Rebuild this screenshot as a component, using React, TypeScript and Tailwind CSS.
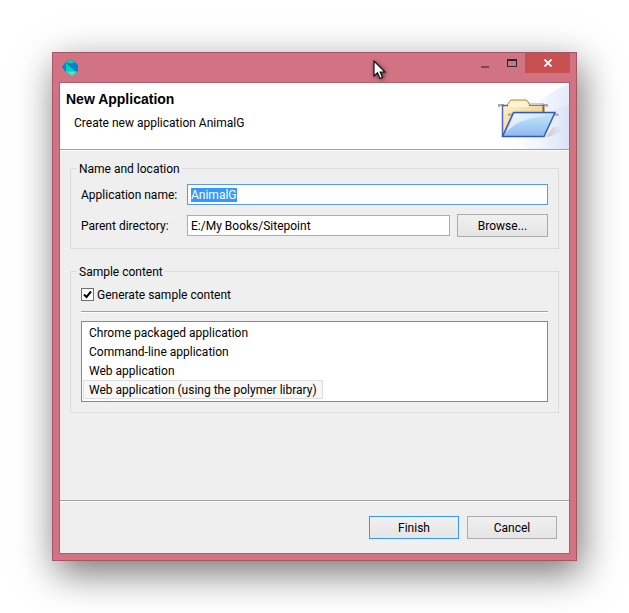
import { useEffect, useRef, useState } from "react";

const templates = [
  "Chrome packaged application",
  "Command-line application",
  "Web application",
  "Web application (using the polymer library)",
];

function DartIcon() {
  return (
    <svg width="16" height="16" viewBox="0 0 16 16" aria-hidden="true">
      <path d="M4 3 8.500 0 13 3 16 6V12L12 16H8L4 13 0 8Z" fill="#0083c9" />
      <path d="M4 4 8.500 0 13 4Z" fill="#14c8b4" />
      <path d="M4 4 14 13H4Z" fill="#00d2b8" />
      <path d="M4 3V13L0 8Z" fill="#0a86c8" />
      <path d="M4 12.500H15L12 16H8Z" fill="#55dec9" />
    </svg>
  );
}

function FolderBanner() {
  return (
    <svg width="79" height="66" viewBox="0 0 79 66" aria-hidden="true">
      <defs>
        <linearGradient id="sky" x1="0" y1="0.2" x2="1" y2="0.3">
          <stop offset="0.3" stopColor="#ffffff" />
          <stop offset="1" stopColor="#e4ebf9" />
        </linearGradient>
        <linearGradient id="ray" x1="0" y1="0" x2="1" y2="0">
          <stop offset="0.2" stopColor="#ffffff" stopOpacity="0" />
          <stop offset="1" stopColor="#cbd8f3" stopOpacity="0.45" />
        </linearGradient>
        <linearGradient id="back" x1="0" y1="0" x2="1" y2="1">
          <stop offset="0" stopColor="#fff3cf" />
          <stop offset="1" stopColor="#edc566" />
        </linearGradient>
        <linearGradient id="front" x1="0" y1="0" x2="0" y2="1">
          <stop offset="0" stopColor="#c4e8fe" />
          <stop offset="1" stopColor="#8fb8ee" />
        </linearGradient>
        <linearGradient id="shine" x1="0" y1="0" x2="1" y2="0.4">
          <stop offset="0" stopColor="#ffffff" stopOpacity="0.85" />
          <stop offset="1" stopColor="#ffffff" stopOpacity="0.1" />
        </linearGradient>
        <linearGradient id="shade" x1="0" y1="0" x2="1" y2="0">
          <stop offset="0" stopColor="#b08f9d" stopOpacity="0.5" />
          <stop offset="1" stopColor="#c9b5c4" stopOpacity="0" />
        </linearGradient>
      </defs>
      <path d="M79 1C58 8 44 25 22 40 12 50 8 58 6 66H79Z" fill="url(#sky)" />
      <path d="M79 22C60 25 40 42 26 66H79Z" fill="url(#ray)" />
      <path d="M56 54 63 44 74 44C71 49 65 53 56 54Z" fill="url(#shade)" />
      <path d="M9 24V22H14M52 22H57V24" fill="none" stroke="#a9a9b0" strokeWidth="2" />
      <path d="M12.500 53V22.500H17.500L19.500 18.500 21 17H36L38 18.500 40 22.500H53.500V50Z" fill="url(#back)" />
      <path d="M17 22.500 19.500 18.500 21 17H36L38 18.500 40 22.500" fill="none" stroke="#b08b35" />
      <path d="M19 23 20.500 19.500 22 18H35L37 19.500 39 24H18Z" fill="#fff4d8" />
      <path d="M39 21H54" fill="none" stroke="#9595c8" />
      <path d="M39 22.500H53.500" fill="none" stroke="#a27c2c" />
      <path d="M53.500 22V30" fill="none" stroke="#8a6720" strokeWidth="2" />
      <path d="M12.500 53V22.500H18" fill="none" stroke="#5364b4" strokeWidth="1.500" />
      <path d="M19 33V31.500H25M62 31.500H67.500V33" fill="none" stroke="#a9a9b8" strokeWidth="2" />
      <path d="M23.500 29.500H65L54 53.500H12.500Z" fill="url(#front)" />
      <path d="M24.500 31H62C54 34 44 34 36 37 26 40 20 45 15 51Z" fill="url(#shine)" />
      <path d="M23.500 29.500H65L54 53.500H12.500Z" fill="none" stroke="#3457c2" strokeWidth="1.500" />
    </svg>
  );
}

function MousePointer() {
  return (
    <svg
      className="pointer-events-none absolute top-[7px] left-[320px] drop-shadow-[1px_1px_2px_rgba(0,0,0,0.6)]"
      width="13"
      height="20"
      viewBox="0 0 13 20"
      aria-hidden="true"
    >
      <path
        d="M1 1V16L4.500 12.800 7 18.500 9.500 17.400 7.200 12H12Z"
        fill="#fff"
        stroke="#111"
        strokeWidth="1.200"
      />
    </svg>
  );
}

const groupBox = "min-w-0 border border-[#dcdcdc] px-1.5";
const groupTitle = "h-[17px] px-0.5 leading-[19px]";
const pushButton =
  "h-[23px] border bg-linear-to-b from-[#f0f0f0] to-[#e5e5e5] pt-px text-center leading-[20px]";
const textBox =
  "h-[21px] min-w-0 flex-1 border bg-white px-[3px] outline-none selection:bg-[#3399ff] selection:text-white";

export default function App() {
  const nameRef = useRef<HTMLInputElement>(null);
  const [name, setName] = useState("AnimalG");
  const [directory, setDirectory] = useState("E:/My Books/Sitepoint");
  const [sample, setSample] = useState(true);
  const [selected, setSelected] = useState(3);

  useEffect(() => {
    nameRef.current?.focus();
    nameRef.current?.select();
  }, []);

  return (
    <div className="flex min-h-screen bg-white p-[52px] font-['Roboto',sans-serif] text-[12px] text-black">
      <main className="relative flex min-w-0 flex-1 flex-col border border-[#a55567] bg-[#d27384] px-1.5 pb-1.5 shadow-[4px_12px_36px_0px_rgba(0,0,0,0.55)]">
        <header className="flex h-[29px] items-start justify-between">
          <span className="pt-1.5 pl-[3px]">
            <DartIcon />
          </span>
          <div className="flex">
            <button aria-label="Minimize" className="flex h-5 w-[27px] items-end justify-center pb-[5px]">
              <span className="h-0.5 w-2 bg-[#7c4751]" />
            </button>
            <button aria-label="Maximize" className="flex h-5 w-[27px] items-center justify-center">
              <span className="h-2 w-2.5 border border-t-2 border-[#2a2a2a]" />
            </button>
            <button aria-label="Close" className="flex h-5 w-[45px] items-center justify-center bg-[#c75050]">
              <svg width="8" height="8" viewBox="0 0 8 8" aria-hidden="true">
                <path d="M0.500 0.500 7.500 7.500M7.500 0.500 0.500 7.500" stroke="#fff" strokeWidth="1.800" />
              </svg>
            </button>
          </div>
        </header>
        <MousePointer />

        <div className="flex flex-1 flex-col border border-[#b05c6e] bg-[#efefef]">
          <section className="flex h-[67px] justify-between border-b border-[#a0a0a0] bg-white">
            <div className="pt-2 pl-1.5">
              <h1 className="font-['Liberation_Sans',sans-serif] text-[14px] leading-[17px] font-bold">New Application</h1>
              <p className="pt-1.5 pl-2 leading-[19px]">Create new application AnimalG</p>
            </div>
            <FolderBanner />
          </section>

          <form className="flex flex-1 flex-col border-t border-white" onSubmit={(e) => e.preventDefault()}>
            <div className="flex flex-1 flex-col gap-3.5 px-2.5 pt-[9px] pb-4">
              <fieldset className={groupBox}>
                <legend className={groupTitle}>Name and location</legend>
                <div className="flex flex-col gap-[9px] px-1 pt-[7px] pb-[11px]">
                  <div className="flex items-center">
                    <label htmlFor="app-name" className="w-[106px]">Application name:</label>
                    <input
                      id="app-name"
                      ref={nameRef}
                      value={name}
                      onChange={(e) => setName(e.target.value)}
                      className={`${textBox} border-[#569de5]`}
                    />
                  </div>
                  <div className="flex items-center">
                    <label htmlFor="parent-dir" className="w-[106px]">Parent directory:</label>
                    <input
                      id="parent-dir"
                      value={directory}
                      onChange={(e) => setDirectory(e.target.value)}
                      className={`${textBox} border-[#abadb3]`}
                    />
                    <button type="button" className={`${pushButton} ml-[7px] w-[91px] border-[#acacac]`}>
                      Browse...
                    </button>
                  </div>
                </div>
              </fieldset>

              <fieldset className={groupBox}>
                <legend className={groupTitle}>Sample content</legend>
                <div className="px-1 pt-1.5 pb-2.5">
                  <label className="flex h-[17px] items-center gap-[3px]">
                    <span className="grid">
                      <input
                        type="checkbox"
                        checked={sample}
                        onChange={(e) => setSample(e.target.checked)}
                        className="peer col-start-1 row-start-1 size-[13px] appearance-none border border-[#707070] bg-white"
                      />
                      <svg
                        className="pointer-events-none invisible col-start-1 row-start-1 peer-checked:visible"
                        width="13"
                        height="13"
                        viewBox="0 0 13 13"
                        aria-hidden="true"
                      >
                        <path d="M3 6.500 5.500 9 10 3.500" fill="none" stroke="#000" strokeWidth="2" />
                      </svg>
                    </span>
                    Generate sample content
                  </label>
                  <hr className="mt-2 h-0.5 border-t border-b border-t-[#a0a0a0] border-b-white" />
                  <ul role="listbox" aria-label="Sample content" className="mt-2 border border-[#828790] bg-white px-px pt-px pb-0.5">
                    {templates.map((t, i) => (
                      <li
                        key={t}
                        role="option"
                        aria-selected={i === selected}
                        onClick={() => setSelected(i)}
                        className={`h-[19px] w-fit border px-[5px] leading-[19px] ${
                          i === selected ? "border-[#dedede] bg-[#f7f7f7]" : "border-transparent"
                        }`}
                      >
                        {t}
                      </li>
                    ))}
                  </ul>
                </div>
              </fieldset>
            </div>

            <footer className="border-t border-[#a0a0a0]">
              <div className="flex justify-end gap-2 border-t border-white px-3 py-3.5">
                <button type="submit" className={`${pushButton} w-[90px] border-[#3399ff]`}>Finish</button>
                <button type="button" className={`${pushButton} w-[90px] border-[#acacac]`}>Cancel</button>
              </div>
            </footer>
          </form>
        </div>
      </main>
    </div>
  );
}
